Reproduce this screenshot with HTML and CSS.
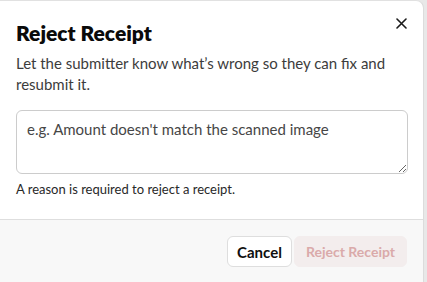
FILE: index.html
```html
<!DOCTYPE html>
<html>
<head>
    <meta charset="utf-8" />
    <title>Reject Receipt</title>
    <link rel="stylesheet" href="styles.css">
</head>
<body>
    <div class="modal">
        <div class="modal-body">
            <button class="close-btn" aria-label="Close">
                <svg width="11" height="11" viewBox="0 0 11 11">
                    <path d="M1 1 L10 10 M10 1 L1 10" stroke="#1a1a1a" stroke-width="1.6" stroke-linecap="round" />
                </svg>
            </button>
            <h2 class="modal-title">Reject Receipt</h2>
            <p class="modal-text">Let the submitter know what’s wrong so they can fix and resubmit it.</p>
            <textarea class="reason" placeholder="e.g. Amount doesn't match the scanned image"></textarea>
            <div class="hint">A reason is required to reject a receipt.</div>
        </div>
        <div class="modal-footer">
            <button class="btn btn-cancel">Cancel</button>
            <button class="btn btn-reject" disabled>Reject Receipt</button>
        </div>
    </div>
</body>
</html>
```

FILE: styles.css
```css
html, body {
    margin: 0;
    height: 100%;
}
body {
    background-color: rgb(232, 232, 232);
    font-family: Lato, "Liberation Sans", sans-serif;
    color: rgb(30, 30, 30);
    overflow: hidden;
}

.modal {
    width: 424px;
    height: 282px;
    background-color: white;
    border-top: 1px solid rgb(225, 225, 225);
    border-right: 1px solid rgb(220, 220, 220);
    border-top-right-radius: 8px;
    box-sizing: border-box;
    display: flex;
    flex-direction: column;
    position: relative;
}

.modal-body {
    padding: 18px 16px 0 16px;
    flex: 0 0 auto;
    height: 218px;
    box-sizing: border-box;
}

.close-btn {
    position: absolute;
    top: 17px;
    right: 16px;
    background: transparent;
    border: none;
    padding: 0;
    width: 11px;
    height: 11px;
    display: flex;
}

.modal-title {
    margin: 0;
    font-size: 21px;
    font-weight: 800;
    color: rgb(10, 10, 10);
    line-height: 28px;
}

.modal-text {
    margin: 6px 0 0 0;
    font-size: 15px;
    line-height: 21px;
    color: rgb(60, 60, 60);
}

.reason {
    display: block;
    margin-top: 15px;
    width: 392px;
    height: 64px;
    box-sizing: border-box;
    border: 1px solid rgb(204, 204, 204);
    border-radius: 6px;
    padding: 9px 10px;
    font-family: Lato, "Liberation Sans", sans-serif;
    font-size: 15px;
    color: rgb(40, 40, 40);
    resize: vertical;
}

.reason::placeholder {
    color: rgb(70, 70, 70);
}

.hint {
    margin-top: 7px;
    font-size: 13px;
    color: rgb(40, 40, 40);
}

.modal-footer {
    flex: 1;
    background-color: rgb(248, 248, 248);
    border-top: 1px solid rgb(222, 222, 222);
    display: flex;
    justify-content: flex-end;
    align-items: flex-start;
    gap: 2px;
    padding: 16px 16px 0 0;
}

.btn {
    height: 31px;
    border-radius: 6px;
    font-family: Lato, "Liberation Sans", sans-serif;
    font-size: 14px;
    font-weight: 700;
    padding: 0 11px;
}

.btn-cancel {
    font-size: 15px;
    padding: 0 9px;
    background-color: white;
    border: 1px solid rgb(222, 222, 222);
    color: rgb(15, 15, 15);
}

.btn-reject {
    background-color: rgb(243, 237, 237);
    border: 1px solid rgb(243, 237, 237);
    color: rgb(218, 170, 170);
}
```
